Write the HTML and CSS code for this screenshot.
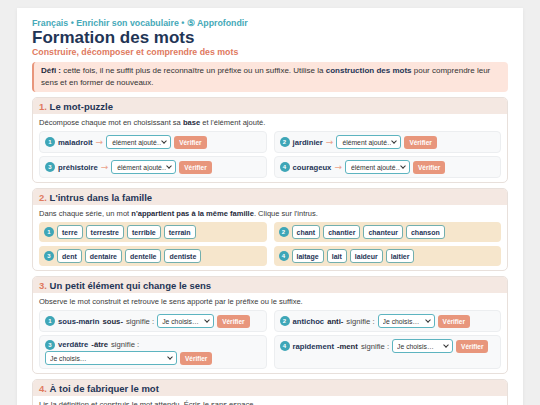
FILE: index.html
```html
<!DOCTYPE html>
<html lang="fr">
<head>
<meta charset="utf-8">
<title>Formation des mots</title>
<link rel="stylesheet" href="styles.css">
</head>
<body>
<main class="card">
  <p class="crumb">Français • Enrichir son vocabulaire • ⑤ Approfondir</p>
  <h1 class="title">Formation des mots</h1>
  <p class="subtitle">Construire, décomposer et comprendre des mots</p>
  <div class="defi"><strong>Défi :</strong> cette fois, il ne suffit plus de reconnaître un préfixe ou un suffixe. Utilise la <strong class="navy">construction des mots</strong> pour comprendre leur sens et en former de nouveaux.</div>

  <section class="sec">
    <h2 class="sec-head"><span class="num">1.</span> Le mot-puzzle</h2>
    <div class="sec-body">
      <p class="instr">Décompose chaque mot en choisissant sa <b>base</b> et l'élément ajouté.</p>
      <div class="grid">
        <div class="item"><span class="badge">1</span><span class="word">maladroit</span><span class="arrow">→</span><span class="selwrap"><select class="sel sel-elem"><option>élément ajouté…</option></select></span><button class="btn">Vérifier</button></div>
        <div class="item"><span class="badge">2</span><span class="word">jardinier</span><span class="arrow">→</span><span class="selwrap"><select class="sel sel-elem"><option>élément ajouté…</option></select></span><button class="btn">Vérifier</button></div>
        <div class="item"><span class="badge">3</span><span class="word">préhistoire</span><span class="arrow">→</span><span class="selwrap"><select class="sel sel-elem"><option>élément ajouté…</option></select></span><button class="btn">Vérifier</button></div>
        <div class="item"><span class="badge">4</span><span class="word">courageux</span><span class="arrow">→</span><span class="selwrap"><select class="sel sel-elem"><option>élément ajouté…</option></select></span><button class="btn">Vérifier</button></div>
      </div>
    </div>
  </section>

  <section class="sec">
    <h2 class="sec-head"><span class="num">2.</span> L'intrus dans la famille</h2>
    <div class="sec-body">
      <p class="instr">Dans chaque série, un mot <b>n'appartient pas à la même famille</b>. Clique sur l'intrus.</p>
      <div class="grid grid-rows">
        <div class="row"><span class="badge">1</span><button class="chip">terre</button><button class="chip">terrestre</button><button class="chip">terrible</button><button class="chip">terrain</button></div>
        <div class="row"><span class="badge">2</span><button class="chip">chant</button><button class="chip">chantier</button><button class="chip">chanteur</button><button class="chip">chanson</button></div>
        <div class="row"><span class="badge">3</span><button class="chip">dent</button><button class="chip">dentaire</button><button class="chip">dentelle</button><button class="chip">dentiste</button></div>
        <div class="row"><span class="badge">4</span><button class="chip">laitage</button><button class="chip">lait</button><button class="chip">laideur</button><button class="chip">laitier</button></div>
      </div>
    </div>
  </section>

  <section class="sec">
    <h2 class="sec-head"><span class="num">3.</span> Un petit élément qui change le sens</h2>
    <div class="sec-body">
      <p class="instr">Observe le mot construit et retrouve le sens apporté par le préfixe ou le suffixe.</p>
      <div class="grid">
        <div class="item item-top"><span class="badge">1</span><span class="word">sous-marin</span><b class="part">sous-</b><span class="lbl">signifie :</span><span class="selwrap"><select class="sel sel-sens"><option>Je choisis…</option></select></span><button class="btn">Vérifier</button></div>
        <div class="item item-top"><span class="badge">2</span><span class="word">antichoc</span><b class="part">anti-</b><span class="lbl">signifie :</span><span class="selwrap"><select class="sel sel-sens"><option>Je choisis…</option></select></span><button class="btn">Vérifier</button></div>
        <div class="item item-top"><span class="badge">3</span><span class="word">verdâtre</span><b class="part">-âtre</b><span class="lbl">signifie :</span><span class="selwrap"><select class="sel sel-long"><option>Je choisis…</option></select></span><button class="btn">Vérifier</button></div>
        <div class="item item-top"><span class="badge">4</span><span class="word">rapidement</span><b class="part">-ment</b><span class="lbl">signifie :</span><span class="selwrap"><select class="sel sel-mid"><option>Je choisis…</option></select></span><button class="btn">Vérifier</button></div>
      </div>
    </div>
  </section>

  <section class="sec">
    <h2 class="sec-head"><span class="num">4.</span> À toi de fabriquer le mot</h2>
    <div class="sec-body">
      <p class="instr">Lis la définition et construis le mot attendu. Écris-le sans espace.</p>
      <div class="grid">
        <div class="item"><span class="badge">1</span><span class="lbl">qui n'est pas possible</span><input class="field" type="text"><button class="btn">Vérifier</button></div>
        <div class="item"><span class="badge">2</span><span class="lbl">refaire une seconde fois</span><input class="field" type="text"><button class="btn">Vérifier</button></div>
      </div>
    </div>
  </section>
</main>
</body>
</html>
```
FILE: styles.css
```css
* { box-sizing: border-box; }
html, body { margin: 0; }
body {
  background: #efefef;
  font-family: "Liberation Sans", Arial, sans-serif;
  color: #3a3a3a;
  font-size: 8px;
  line-height: 11px;
}
.card {
  width: 506px;
  margin: 8px auto 0;
  background: #fff;
  padding: 10px 15px 20px;
  box-shadow: 0 1px 4px rgba(0, 0, 0, 0.06);
}
.crumb {
  margin: 0;
  font-size: 8.8px;
  line-height: 11px;
  font-weight: bold;
  color: #45a9b8;
}
.title {
  margin: 0;
  font-size: 17px;
  line-height: 18px;
  font-weight: bold;
  color: #1f3556;
}
.subtitle {
  margin: 0;
  font-size: 8.8px;
  line-height: 11px;
  font-weight: bold;
  color: #e07a5f;
}
.defi {
  margin-top: 4px;
  background: #fde5dc;
  border-left: 2px solid #e8967c;
  border-radius: 4px;
  padding: 3px 8px 3px 7px;
  line-height: 12px;
  color: #333;
}
.defi strong { color: #1f2a3c; }
.defi .navy { color: #1f3556; }

.sec {
  margin-top: 5px;
  border: 1px solid #e8e0db;
  border-radius: 5px;
  overflow: hidden;
}
.sec-head {
  margin: 0;
  background: #f4e8e2;
  padding: 3px 6px 2px;
  font-size: 9.5px;
  line-height: 11px;
  font-weight: bold;
  color: #1f3556;
}
.num { color: #e07a5f; }
.sec-body { padding: 3px 6px 4px; }
.instr { margin: 0 0 3px; font-size: 7.55px; }
.instr b { color: #1f2a3c; }

.grid {
  display: grid;
  grid-template-columns: 1fr 1fr;
  gap: 3px 7px;
}
.grid-rows { gap: 4px 7px; }

.item {
  display: flex;
  flex-wrap: wrap;
  align-items: center;
  gap: 1px 3px;
  background: #f8f9fa;
  border: 1px solid #eceef0;
  border-radius: 4px;
  padding: 3px 5px;
  min-height: 21px;
  font-size: 7.7px;
}
.item-top { align-content: flex-start; }

.badge {
  display: inline-flex;
  align-items: center;
  justify-content: center;
  width: 10px;
  height: 10px;
  border-radius: 50%;
  background: #3ea6b7;
  color: #fff;
  font-size: 6px;
  font-weight: bold;
  line-height: 1;
}
.word { font-weight: bold; color: #1f3556; }
.part { color: #1f2a3c; }
.lbl { color: #444; }
.arrow { color: #eba38c; font-size: 9px; font-family: "DejaVu Sans", sans-serif; }

.selwrap {
  position: relative;
  display: inline-flex;
}
.selwrap::after {
  content: "";
  position: absolute;
  right: 5px;
  top: 4px;
  width: 3px;
  height: 3px;
  border-right: 1px solid #333;
  border-bottom: 1px solid #333;
  transform: rotate(45deg);
  pointer-events: none;
}
.sel {
  -webkit-appearance: none;
  appearance: none;
  height: 14px;
  font-family: "Liberation Sans", Arial, sans-serif;
  font-size: 6.8px;
  color: #333;
  background: #fff;
  border: 1px solid #5db4c0;
  border-radius: 3px;
  padding: 0 9px 0 5px;
  margin: 0;
}
.sel-elem { width: 65px; }
.sel-sens { width: 57px; padding-left: 4px; }
.sel-mid { width: 61px; padding-left: 4px; }
.sel-long { width: 132px; padding-left: 4px; }

.field {
  height: 14px;
  width: 60px;
  border: 1px solid #5db4c0;
  border-radius: 3px;
  font-size: 7px;
}

.btn {
  height: 13px;
  padding: 0 5px;
  border: none;
  border-radius: 3px;
  background: #e8967c;
  color: #fff;
  font-family: "Liberation Sans", Arial, sans-serif;
  font-size: 6.5px;
  font-weight: bold;
}

.row {
  display: flex;
  align-items: center;
  gap: 3px;
  background: #f6e6cc;
  border-radius: 4px;
  padding: 3px 5px;
  min-height: 20px;
}
.chip {
  height: 14px;
  padding: 0 4px;
  background: #fff;
  border: 1px solid #72afae;
  border-radius: 3px;
  font-family: "Liberation Sans", Arial, sans-serif;
  font-size: 7px;
  font-weight: bold;
  color: #1f3556;
}
```
